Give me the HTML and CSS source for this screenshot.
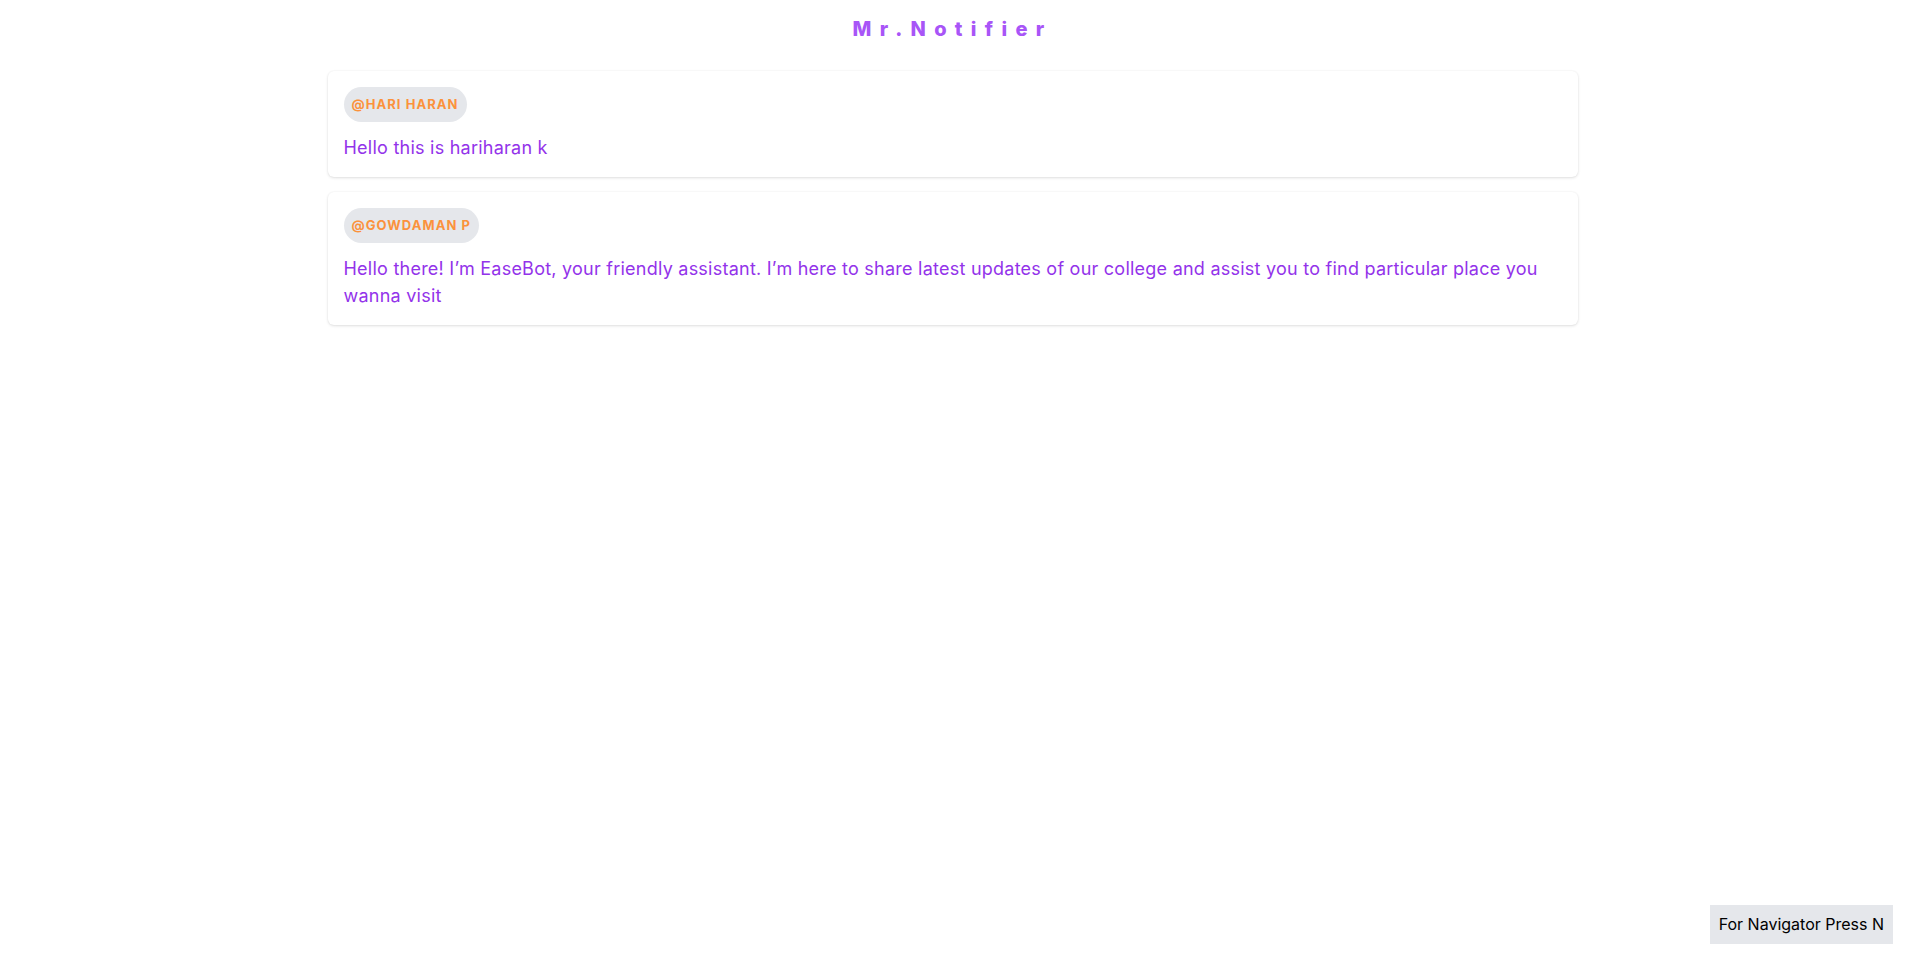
FILE: index.html
```html
<!DOCTYPE html>
<html lang="en">
<head>
<meta charset="utf-8">
<title>Mr.Notifier</title>
<link rel="stylesheet" href="styles.css">
</head>
<body>
<header class="title">Mr.Notifier</header>
<main class="feed">
  <article class="card">
    <span class="badge">@HARI HARAN</span>
    <p class="msg">Hello this is hariharan k</p>
  </article>
  <article class="card">
    <span class="badge">@GOWDAMAN P</span>
    <p class="msg">Hello there! I’m EaseBot, your friendly assistant. I’m here to share latest updates of our college and assist you to find particular place you wanna visit</p>
  </article>
</main>
<div class="nav-hint">For Navigator Press N</div>
</body>
</html>
```
FILE: styles.css
```css
html, body {
  margin: 0;
  padding: 0;
  background: #ffffff;
}
body {
  font-family: Inter, "Open Sans", sans-serif;
  min-height: 960px;
}
.title {
  text-align: center;
  font-weight: 800;
  font-size: 20px;
  line-height: 28px;
  letter-spacing: 8.3px;
  color: #a855f7;
  padding-top: 15px;
  margin-bottom: 28px;
}
.feed {
  width: 1250px;
  margin: 0 auto;
  display: flex;
  flex-direction: column;
  gap: 15px;
}
.card {
  background: #ffffff;
  border-radius: 6px;
  padding: 16px;
  display: flex;
  flex-direction: column;
  align-items: flex-start;
  box-shadow: 0 1px 3px rgba(0, 0, 0, 0.12), 0 0 2px rgba(0, 0, 0, 0.05);
}
.badge {
  display: inline-block;
  background: #e5e7eb;
  color: #fb923c;
  font-weight: 700;
  font-size: 13px;
  letter-spacing: 1.05px;
  height: 35px;
  line-height: 35px;
  padding: 0 8px;
  border-radius: 999px;
}
.msg {
  margin: 12px 0 0;
  font-size: 18px;
  line-height: 27px;
  letter-spacing: 0.24px;
  color: #9333ea;
}
.nav-hint {
  position: fixed;
  right: 12px;
  bottom: 16px;
  background: #e5e7eb;
  color: #000000;
  font-size: 16px;
  line-height: 23px;
  padding: 8px 9px;
}
```
